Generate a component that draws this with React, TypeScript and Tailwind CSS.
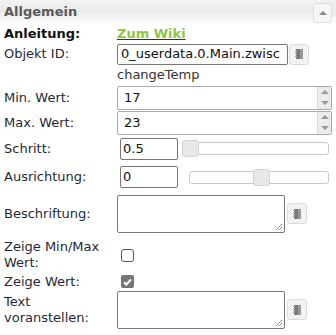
import React from 'react';

const font = { fontFamily: '"DejaVu Sans", Verdana, sans-serif' };

function PickButton() {
  return (
    <div className="w-[20px] h-[21px] shrink-0 rounded-[3px] border border-[#dcdcdc] bg-[#f2f2f2] flex items-center justify-center">
      <svg width="8" height="10" viewBox="0 0 8 10">
        <rect x="1" y="0" width="7" height="10" fill="#7a7a7a" />
        <rect x="0" y="1" width="2" height="1" fill="#aaa" />
        <rect x="0" y="3" width="2" height="1" fill="#aaa" />
        <rect x="0" y="5" width="2" height="1" fill="#aaa" />
        <rect x="0" y="7" width="2" height="1" fill="#aaa" />
        <rect x="5" y="0" width="3" height="10" fill="#999" />
      </svg>
    </div>
  );
}

function Spinner() {
  return (
    <div className="w-[14px] self-stretch flex flex-col bg-[#ececec] border-l border-[#d8d8d8]">
      <div className="flex-1 flex items-center justify-center">
        <div className="w-0 h-0 border-l-[4px] border-r-[4px] border-b-[4px] border-l-transparent border-r-transparent border-b-[#9a9a9a]" />
      </div>
      <div className="flex-1 flex items-center justify-center">
        <div className="w-0 h-0 border-l-[4px] border-r-[4px] border-t-[4px] border-l-transparent border-r-transparent border-t-[#9a9a9a]" />
      </div>
    </div>
  );
}

function Slider({ handle, left }: { handle: number; left: number }) {
  return (
    <div className="flex-1 relative h-[17px] flex items-center" style={{ marginLeft: left }}>
      <div className="w-full h-[13px] rounded-[3px] border border-[#c9c9c9] bg-white" />
      <div
        className="absolute top-0 w-[17px] h-[17px] rounded-[3px] border border-[#d3d3d3] bg-[#e8e8e8]"
        style={{ left: handle }}
      />
    </div>
  );
}

function Label({ children }: { children: React.ReactNode }) {
  return <div className="w-[117px] shrink-0 pl-[4px] leading-[16px] text-[#1f2833]">{children}</div>;
}

export default function App() {
  return (
    <div className="w-[336px] h-[335px] bg-white text-[13px] overflow-hidden" style={font}>
      {/* header */}
      <div className="h-[24px] flex items-center justify-between pl-[4px] pr-[4px] bg-gradient-to-b from-[#f2f2f2] via-[#ebebeb] to-white">
        <span className="font-bold text-[#5a5a5a] text-[13px]">Allgemein</span>
        <div className="w-[19px] h-[20px] rounded-[3px] border border-[#dedede] bg-[#f6f6f6] flex items-center justify-center mt-[2px]">
          <div className="w-0 h-0 border-l-[4px] border-r-[4px] border-b-[4px] border-l-transparent border-r-transparent border-b-[#8a8a8a]" />
        </div>
      </div>

      <div className="flex items-center h-[19px]">
        <Label><span className="font-bold text-[#111]">Anleitung:</span></Label>
        <a className="font-bold text-[#8dc63f] underline decoration-[#333] leading-[16px]">Zum Wiki</a>
      </div>

      <div className="flex items-center h-[22px]">
        <Label>Objekt ID:</Label>
        <div className="w-[171px] h-[21px] border border-[#767676] rounded-[2px] px-[3px] flex items-center text-[#111] overflow-hidden whitespace-nowrap">
          0_userdata.0.Main.zwisc
        </div>
        <div className="ml-[1px]"><PickButton /></div>
      </div>

      <div className="flex items-center h-[20px]">
        <Label>{''}</Label>
        <span className="text-[#333]">changeTemp</span>
      </div>

      <div className="flex items-center h-[25px]">
        <Label>Min. Wert:</Label>
        <div className="w-[215px] h-[24px] border border-[#a9a9a9] rounded-[2px] flex items-stretch text-[#111]">
          <div className="flex-1 pl-[6px] flex items-center">17</div>
          <Spinner />
        </div>
      </div>

      <div className="flex items-center h-[25px]">
        <Label>Max. Wert:</Label>
        <div className="w-[215px] h-[24px] border border-[#a9a9a9] rounded-[2px] flex items-stretch text-[#111]">
          <div className="flex-1 pl-[6px] flex items-center">23</div>
          <Spinner />
        </div>
      </div>

      <div className="flex items-center h-[27px]">
        <Label>Schritt:</Label>
        <div className="ml-[3px] w-[58px] h-[22px] border border-[#767676] rounded-[2px] px-[2px] flex items-center text-[#111]">0.5</div>
        <div className="flex-1 pr-[7px]">
          <Slider handle={0} left={4} />
        </div>
      </div>

      <div className="flex items-center h-[30px]">
        <Label>Ausrichtung:</Label>
        <div className="ml-[3px] w-[58px] h-[22px] border border-[#767676] rounded-[2px] px-[2px] flex items-center text-[#111]">0</div>
        <div className="flex-1 pr-[7px]">
          <Slider handle={64} left={11} />
        </div>
      </div>

      <div className="flex items-center h-[43px]">
        <Label>Beschriftung:</Label>
        <div className="w-[168px] h-[38px] border border-[#767676] rounded-[2px] relative">
          <svg className="absolute right-[1px] bottom-[1px]" width="8" height="8" viewBox="0 0 8 8">
            <path d="M7 1L1 7M7 4L4 7" stroke="#888" strokeWidth="1" />
          </svg>
        </div>
        <div className="ml-[2px]"><PickButton /></div>
      </div>

      <div className="flex items-center h-[34px] mt-[3px]">
        <Label>Zeige Min/Max<br />Wert:</Label>
        <div className="ml-[4px] w-[13px] h-[13px] rounded-[3px] border border-[#555] bg-white" />
      </div>

      <div className="flex items-center h-[19px]">
        <Label>Zeige Wert:</Label>
        <div className="ml-[4px] w-[13px] h-[13px] rounded-[2px] bg-[#767676] flex items-center justify-center">
          <svg width="9" height="8" viewBox="0 0 9 8">
            <path d="M1 4.2L3.4 6.5L8 1.3" stroke="white" strokeWidth="2" fill="none" />
          </svg>
        </div>
      </div>

      <div className="flex items-center h-[37px]">
        <Label>Text<br />voranstellen:</Label>
        <div className="w-[168px] h-[38px] border border-[#767676] rounded-[2px] relative">
          <svg className="absolute right-[1px] bottom-[1px]" width="8" height="8" viewBox="0 0 8 8">
            <path d="M7 1L1 7M7 4L4 7" stroke="#888" strokeWidth="1" />
          </svg>
        </div>
        <div className="ml-[2px]"><PickButton /></div>
      </div>
    </div>
  );
}
